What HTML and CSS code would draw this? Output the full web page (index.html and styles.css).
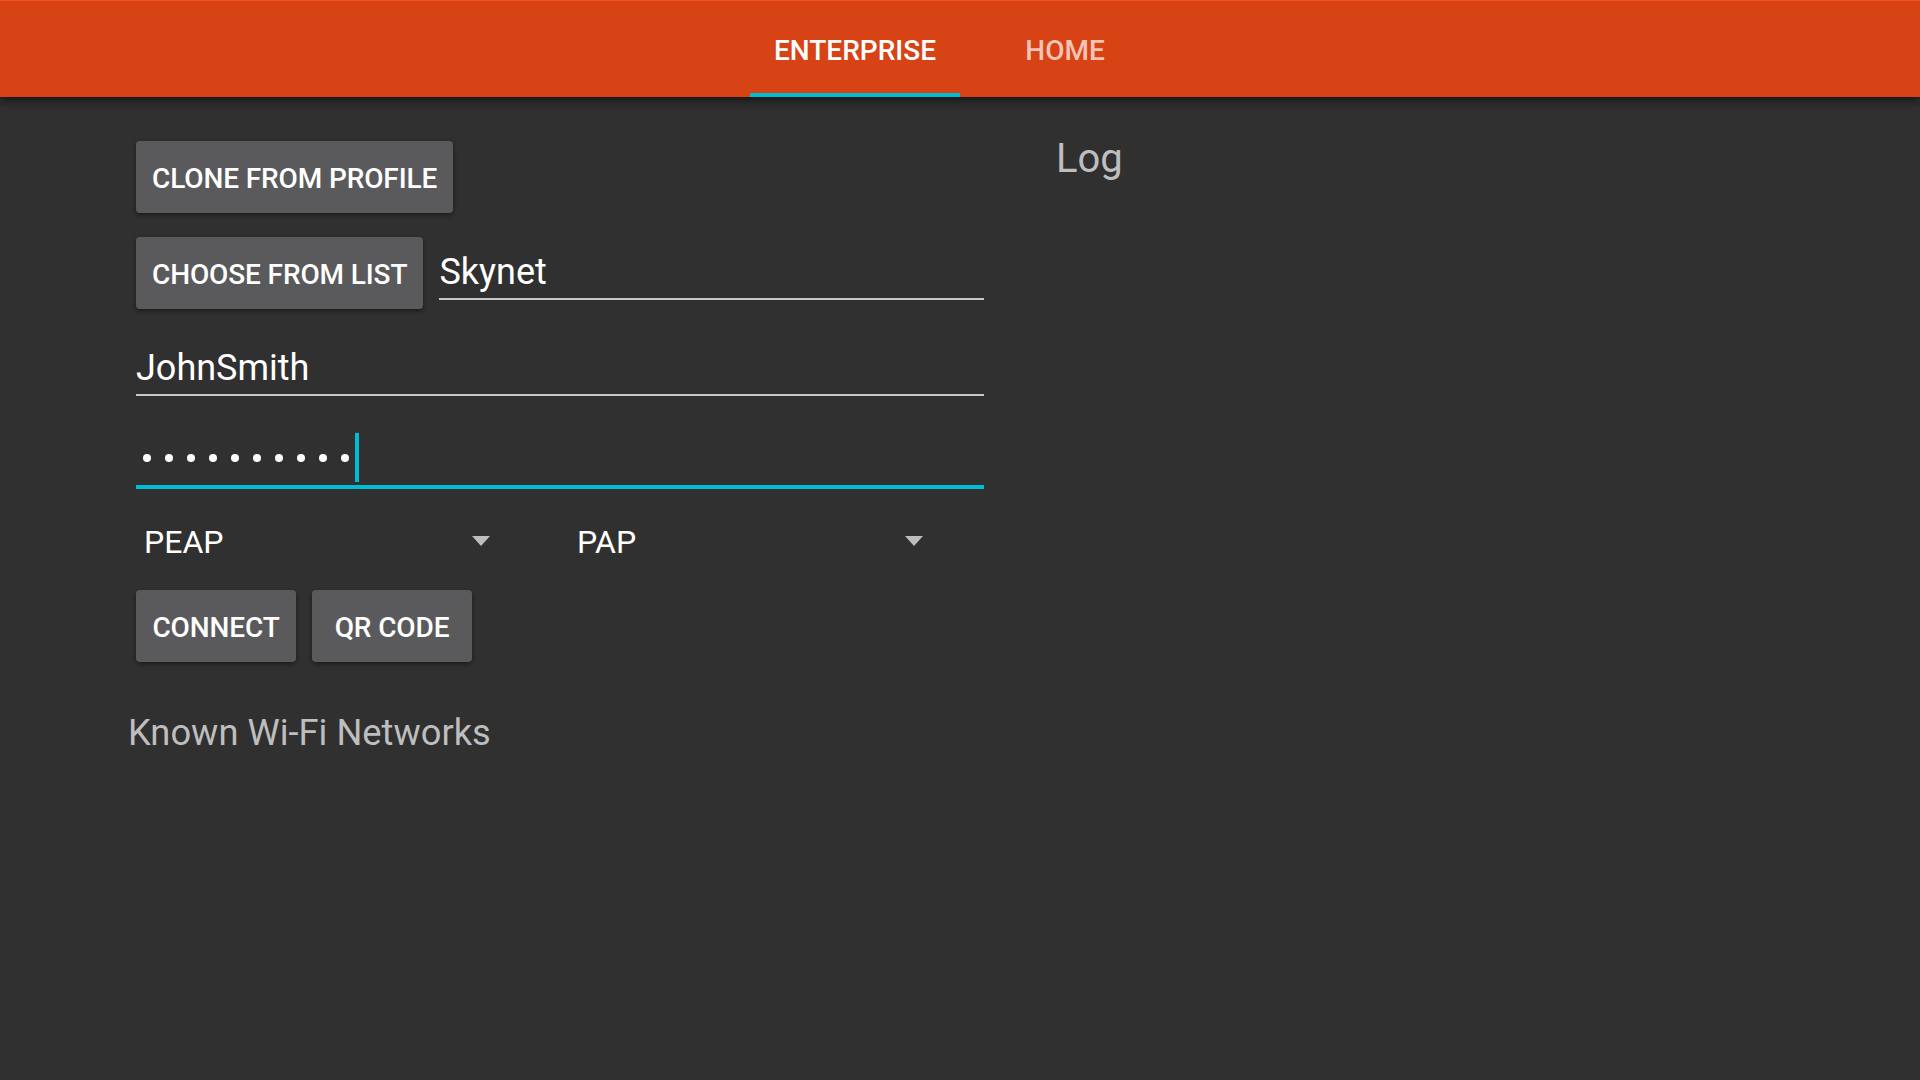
FILE: index.html
```html
<!DOCTYPE html>
<html lang="en">
<head>
<meta charset="utf-8">
<title>Wi-Fi Enterprise</title>
<link rel="stylesheet" href="styles.css">
</head>
<body>
<header class="appbar">
  <nav class="tabs">
    <div class="tab active">ENTERPRISE</div>
    <div class="tab">HOME</div>
  </nav>
</header>
<main class="content">
  <section class="form">
    <button class="btn">CLONE FROM PROFILE</button>
    <div class="ssid-row">
      <button class="btn">CHOOSE FROM LIST</button>
      <div class="field field-grow"><span class="field-text">Skynet</span></div>
    </div>
    <div class="field field-user"><span class="field-text">JohnSmith</span></div>
    <div class="field field-focused">
      <span class="dots" aria-label="password">
        <i class="dot"></i><i class="dot"></i><i class="dot"></i><i class="dot"></i><i class="dot"></i><i class="dot"></i><i class="dot"></i><i class="dot"></i><i class="dot"></i><i class="dot"></i>
      </span>
      <span class="cursor"></span>
    </div>
    <div class="spinners">
      <div class="spinner"><span class="spinner-text">PEAP</span><span class="arrow"></span></div>
      <div class="spinner"><span class="spinner-text">PAP</span><span class="arrow"></span></div>
    </div>
    <div class="actions">
      <button class="btn">CONNECT</button>
      <button class="btn">QR CODE</button>
    </div>
    <h2 class="section-title">Known Wi-Fi Networks</h2>
  </section>
  <section class="log">
    <h2 class="log-title">Log</h2>
  </section>
</main>
</body>
</html>
```

FILE: styles.css
```css
* { box-sizing: border-box; }

html, body {
  margin: 0;
  padding: 0;
  height: 100%;
}

body {
  background: #303030;
  font-family: Roboto, "Liberation Sans", sans-serif;
  color: #ffffff;
  overflow: hidden;
}

.appbar {
  height: 97px;
  background: #d84315;
  border-top: 1px solid #f4511e;
  box-shadow: 0 4px 9px rgba(0, 0, 0, 0.55);
  position: relative;
  z-index: 2;
}

.tabs {
  display: flex;
  justify-content: center;
  height: 100%;
}

.tab {
  width: 210px;
  height: 96px;
  padding-top: 6px;
  border-bottom: 4px solid transparent;
  display: flex;
  align-items: center;
  justify-content: center;
  font-size: 28px;
  font-weight: 500;
  color: rgba(255, 255, 255, 0.7);
}

.tab.active {
  color: #ffffff;
  border-bottom-color: #00bcd4;
}

.content {
  display: flex;
  align-items: flex-start;
}

.form {
  width: 848px;
  margin-left: 136px;
  display: flex;
  flex-direction: column;
  align-items: flex-start;
}

.btn {
  height: 72px;
  padding: 3px 16px 0;
  border: none;
  border-radius: 4px;
  background: #5a5a5c;
  color: #ffffff;
  font-family: Roboto, "Liberation Sans", sans-serif;
  font-size: 28px;
  font-weight: 500;
  letter-spacing: -0.12px;
  box-shadow: 0 2px 4px rgba(0, 0, 0, 0.45);
  white-space: nowrap;
}

.form > .btn:first-child {
  margin-top: 44px;
}

.ssid-row {
  display: flex;
  align-items: flex-start;
  width: 100%;
  height: 72px;
  margin-top: 24px;
  gap: 16px;
}

.field {
  padding-top: 11px;
  padding-bottom: 2px;
  border-bottom: 2px solid #c6c6c6;
  display: flex;
  align-items: center;
  height: 63px;
  width: 100%;
}

.field-grow {
  flex: 1;
}

.field-text {
  font-size: 36px;
  line-height: 48px;
  color: #ffffff;
}

.field-user {
  margin-top: 24px;
}

.field-focused {
  margin-top: 26px;
  height: 67px;
  padding-top: 11px;
  padding-bottom: 4px;
  border-bottom: 4px solid #00bcd4;
  align-items: center;
}

.dots {
  display: flex;
  gap: 14px;
  padding-left: 7px;
  margin-top: 2px;
}

.dot {
  display: block;
  width: 8px;
  height: 8px;
  border-radius: 50%;
  background: #ffffff;
}

.cursor {
  display: block;
  width: 4px;
  height: 49px;
  margin-left: 6px;
  background: #00bcd4;
}

.spinners {
  display: flex;
  margin-top: 5px;
  height: 96px;
}

.spinner {
  flex: none;
  width: 433px;
  height: 96px;
  padding-left: 8px;
  padding-right: 79px;
  display: flex;
  align-items: center;
  justify-content: space-between;
}

.spinner-text {
  font-size: 32px;
  color: #ffffff;
}

.arrow {
  width: 0;
  height: 0;
  border-left: 9.5px solid transparent;
  border-right: 9.5px solid transparent;
  border-top: 10px solid #bdbdbd;
  margin-top: -2px;
}

.actions {
  display: flex;
  gap: 16px;
}

.actions .btn {
  width: 160px;
  padding: 3px 0 0;
}

.section-title {
  margin: 47px 0 0 -8px;
  font-size: 36.3px;
  line-height: 48px;
  font-weight: 400;
  color: #bebebe;
}

.log {
  margin-left: 72px;
}

.log-title {
  margin: 38px 0 0 0;
  font-size: 40px;
  line-height: 48px;
  font-weight: 400;
  color: #bebebe;
}
```
